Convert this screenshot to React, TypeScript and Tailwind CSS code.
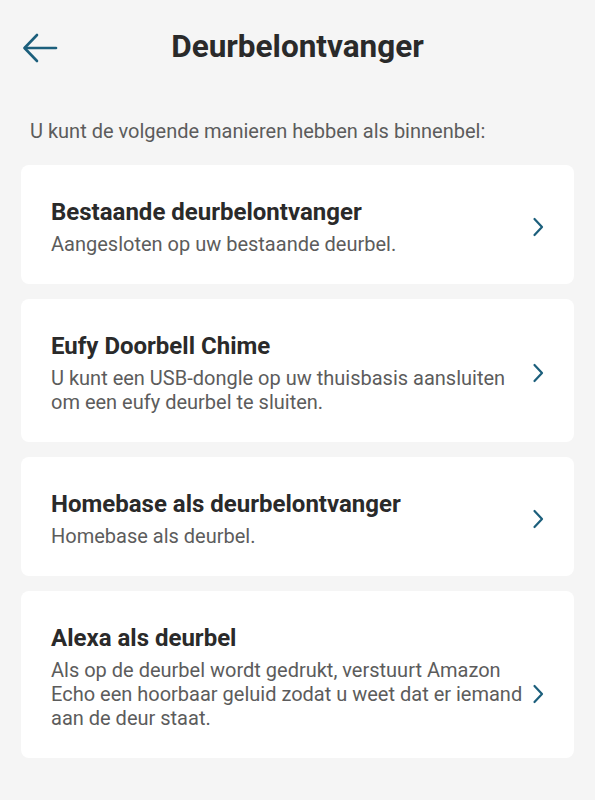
type Option = {
    title: string;
    description: string;
    chevronOffset?: string;
};

const options: Option[] = [
    {
        title: 'Bestaande deurbelontvanger',
        description: 'Aangesloten op uw bestaande deurbel.',
    },
    {
        title: 'Eufy Doorbell Chime',
        description: 'U kunt een USB-dongle op uw thuisbasis aansluiten om een eufy deurbel te sluiten.',
    },
    {
        title: 'Homebase als deurbelontvanger',
        description: 'Homebase als deurbel.',
    },
    {
        title: 'Alexa als deurbel',
        description:
            'Als op de deurbel wordt gedrukt, verstuurt Amazon Echo een hoorbaar geluid zodat u weet dat er iemand aan de deur staat.',
        chevronOffset: 'mt-[34px]',
    },
];

const BackArrow = () => (
    <svg width="36" height="30" viewBox="0 0 36 30" fill="none" stroke="#1c5f7c" strokeWidth="2.6" strokeLinecap="round" strokeLinejoin="round">
        <path d="M34 15H3" />
        <path d="M15 2L2.5 15L15 28" />
    </svg>
);

const Chevron = ({ className }: { className?: string }) => (
    <svg className={className} width="12" height="20" viewBox="0 0 12 20" fill="none" stroke="#1c5f7c" strokeWidth="2.2" strokeLinecap="round" strokeLinejoin="round">
        <path d="M2.5 2L10 10L2.5 18" />
    </svg>
);

const OptionCard = ({ option }: { option: Option }) => (
    <div className="flex items-center rounded-lg bg-white pb-7 pl-[30px] pr-[30px] pt-8">
        <div className="min-w-0 flex-1">
            <div className="text-[24px] font-bold leading-[30px] text-[#2a2a2a]">{option.title}</div>
            <div className="mt-[5px] text-[20px] leading-6 text-[#5c5c5c]">{option.description}</div>
        </div>
        <Chevron className={`shrink-0 ${option.chevronOffset ?? ''}`} />
    </div>
);

export default function App() {
    return (
        <div className="min-h-[800px] w-[595px] bg-[#f5f5f5] pb-10 font-['Roboto',sans-serif]">
            <header className="grid h-[94px] grid-cols-[80px_1fr_80px] items-center">
                <div className="pl-[22px] pt-[2px]">
                    <BackArrow />
                </div>
                <h1 className="text-center text-[31.5px] font-bold text-[#2a2a2a]">Deurbelontvanger</h1>
                <div />
            </header>

            <p className="mt-[25px] px-[30px] text-[20px] leading-6 text-[#5c5c5c]">
                U kunt de volgende manieren hebben als binnenbel:
            </p>

            <div className="mx-[21px] mt-[22px] flex flex-col gap-[15px]">
                {options.map((option) => (
                    <OptionCard key={option.title} option={option} />
                ))}
            </div>
        </div>
    );
}
